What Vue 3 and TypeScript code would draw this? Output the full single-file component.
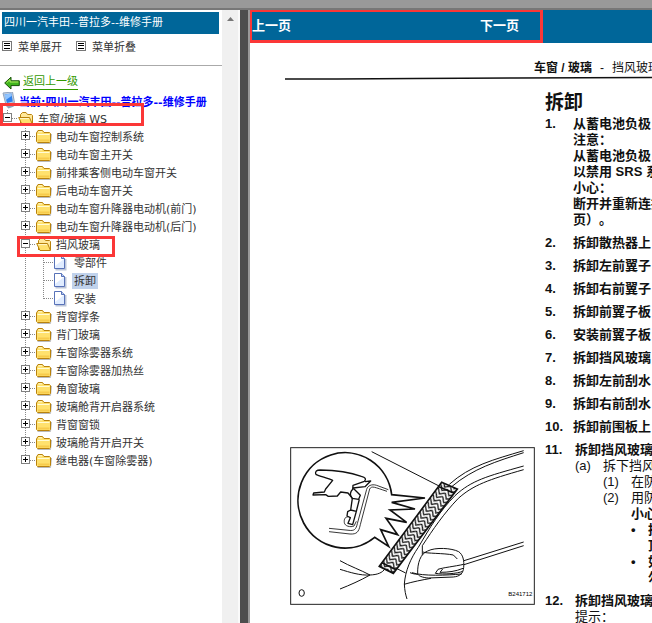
<script setup lang="ts">
import { computed, ref } from 'vue'

interface TreeGroup {
  label: string
  marked?: boolean
  pages?: string[]
}

interface Step {
  title: string
  lines?: string[]
}

const groups: TreeGroup[] = [
  { label: '电动车窗控制系统' },
  { label: '电动车窗主开关' },
  { label: '前排乘客侧电动车窗开关' },
  { label: '后电动车窗开关' },
  { label: '电动车窗升降器电动机(前门)' },
  { label: '电动车窗升降器电动机(后门)' },
  { label: '挡风玻璃', marked: true, pages: ['零部件', '拆卸', '安装'] },
  { label: '背窗撑条' },
  { label: '背门玻璃' },
  { label: '车窗除雾器系统' },
  { label: '车窗除雾器加热丝' },
  { label: '角窗玻璃' },
  { label: '玻璃舱背开启器系统' },
  { label: '背窗窗锁' },
  { label: '玻璃舱背开启开关' },
  { label: '继电器(车窗除雾器)' },
]

const rootOpen = ref(true)
const openGroups = ref<string[]>(['挡风玻璃'])
const selected = ref('拆卸')

const visibleGroups = computed(() => (rootOpen.value ? groups : []))

function isOpen(label: string): boolean {
  return openGroups.value.includes(label)
}

function toggle(label: string): void {
  openGroups.value = isOpen(label)
    ? openGroups.value.filter((name) => name !== label)
    : [...openGroups.value, label]
}

function expandAll(): void {
  rootOpen.value = true
  openGroups.value = groups.map((group) => group.label)
}

function collapseAll(): void {
  openGroups.value = []
}

const steps: Step[] = [
  {
    title: '从蓄电池负极',
    lines: ['注意：', '从蓄电池负极', '以禁用 SRS 系', '小心：', '断开并重新连接', '页）。'],
  },
  { title: '拆卸散热器上' },
  { title: '拆卸左前翼子' },
  { title: '拆卸右前翼子' },
  { title: '拆卸前翼子板' },
  { title: '安装前翼子板' },
  { title: '拆卸挡风玻璃' },
  { title: '拆卸左前刮水' },
  { title: '拆卸右前刮水' },
  { title: '拆卸前围板上' },
]
</script>

<template>
  <div class="frames">
    <div class="top-strip"></div>

    <div class="columns">
      <aside class="sidebar">
        <div class="sidebar-body">
          <h1 class="manual-title">四川一汽丰田--普拉多--维修手册</h1>

          <div class="menu-actions">
            <button type="button" class="menu-button" @click="expandAll">
              <svg class="menu-icon" viewBox="0 0 10 10" aria-hidden="true">
                <rect x="0.5" y="0.5" width="9" height="9" fill="#fff" stroke="#777" />
                <path d="M2 2.5h6M2 4.5h6M2 7.5h6" stroke="#000" />
              </svg>
              菜单展开
            </button>
            <button type="button" class="menu-button" @click="collapseAll">
              <svg class="menu-icon" viewBox="0 0 10 10" aria-hidden="true">
                <rect x="0.5" y="0.5" width="9" height="9" fill="#fff" stroke="#777" />
                <path d="M2 2.5h6M2 4.5h6M2 7.5h6" stroke="#000" />
              </svg>
              菜单折叠
            </button>
          </div>

          <nav class="tree">
            <div class="back-row">
              <svg class="back-icon" viewBox="0 0 16 14" aria-hidden="true">
                <path d="M0.7 7 7 1.2V4.8H15.3V9.6H7V13Z" fill="#3fb51c" stroke="#174f08" />
                <path d="M2.5 6.8 6 3.6V6H14.3" fill="none" stroke="#b4ef62" />
              </svg>
              <a href="#up" class="back-link">返回上一级</a>
            </div>

            <div class="row">
              <svg class="cell" viewBox="0 0 18 18" aria-hidden="true">
                <path d="M3 1 12.5 0 14.5 10.5 6 13Z" fill="#c3cfdf" stroke="#8fa3be" />
                <path d="M4.6 2.5 11.4 1.6 12.8 9.4 7 11Z" fill="#2f80ec" />
                <path d="M4.6 2.5 11.4 1.6 11.8 3.8 5.8 8Z" fill="#8fc4ff" />
                <path d="M6 14 12 12.5 14 14.5 8.5 16.5Z" fill="#8fa2ba" />
              </svg>
              <a href="#current" class="current">当前:四川一汽丰田--普拉多--维修手册</a>
            </div>

            <div class="row">
              <span class="cell joint last">
                <button
                  type="button"
                  class="toggle"
                  :class="{ open: rootOpen }"
                  aria-label="车窗/玻璃 WS"
                  @click="rootOpen = !rootOpen"
                ></button>
              </span>
              <svg class="cell" viewBox="0 0 18 18" aria-hidden="true">
                <path d="M2.5 14V4.5L4.5 2.5H8L9.5 4.5H13.5L14.5 5.5V14" fill="#ffe89a" stroke="#b9820d" />
                <path d="M0.7 7.5H11.5L14.5 14.5H4Z" fill="#ffe16d" stroke="#b9820d" />
                <path d="M2 8.6H11" stroke="#fff9cf" />
              </svg>
              <a href="#ws" class="label">车窗/玻璃 WS</a>
              <span class="mark mark-root"></span>
            </div>

            <template v-for="(group, index) in visibleGroups" :key="group.label">
              <div class="row">
                <span class="cell"></span>
                <span class="cell joint" :class="{ last: index === groups.length - 1 }">
                  <button
                    type="button"
                    class="toggle"
                    :class="{ open: isOpen(group.label) }"
                    :aria-label="group.label"
                    @click="toggle(group.label)"
                  ></button>
                </span>
                <svg v-if="isOpen(group.label)" class="cell" viewBox="0 0 18 18" aria-hidden="true">
                  <path d="M2.5 14V4.5L4.5 2.5H8L9.5 4.5H13.5L14.5 5.5V14" fill="#ffe89a" stroke="#b9820d" />
                  <path d="M0.7 7.5H11.5L14.5 14.5H4Z" fill="#ffe16d" stroke="#b9820d" />
                  <path d="M2 8.6H11" stroke="#fff9cf" />
                </svg>
                <svg v-else class="cell" viewBox="0 0 18 18" aria-hidden="true">
                  <path d="M1.5 15.5H14.5L15.5 6" fill="none" stroke="#bbb" />
                  <path
                    d="M0.5 13.5V5L2 2.5H6.5L8 4.5H13.5L14.5 5.5V13.5L13.5 14.5H1.5Z"
                    fill="#ffe16d"
                    stroke="#b9820d"
                  />
                  <path d="M1.5 6.5H13.5M2.5 3.8H6" stroke="#fffbd5" />
                  <path d="M2 12.5H13.5" stroke="#f7cb4c" stroke-width="2" />
                </svg>
                <a :href="'#' + group.label" class="label">{{ group.label }}</a>
                <span v-if="group.marked" class="mark mark-group"></span>
              </div>

              <template v-if="isOpen(group.label)">
                <div v-for="(page, at) in group.pages ?? []" :key="page" class="row">
                  <span class="cell"></span>
                  <span class="cell line"></span>
                  <span class="cell joint" :class="{ last: at === (group.pages?.length ?? 0) - 1 }"></span>
                  <svg class="cell" viewBox="0 0 18 18" aria-hidden="true">
                    <path d="M1.5 15.5H11.5V5" fill="none" stroke="#bcc5d8" stroke-width="2" />
                    <path d="M0.5 1.5H7.5L10.5 4.5V14.5H0.5Z" fill="#e0ecff" stroke="#5872b8" />
                    <path d="M1 2H7V5H10L1 12Z" fill="#fff" />
                    <path d="M7.5 1.5V4.5H10.5" fill="#b9cdf3" stroke="#5872b8" />
                  </svg>
                  <a
                    :href="'#' + page"
                    class="label"
                    :class="{ selected: selected === page }"
                    @click="selected = page"
                    >{{ page }}</a
                  >
                </div>
              </template>
            </template>
          </nav>
        </div>

        <div class="scroll-track">
          <svg class="scroll-arrow" viewBox="0 0 7 4" aria-hidden="true">
            <path d="M0 4 3.5 0 7 4Z" fill="#777" />
          </svg>
        </div>
      </aside>

      <div class="splitter"></div>

      <main class="viewer">
        <header class="pager">
          <div class="pager-links">
            <a href="#prev">上一页</a>
            <a href="#next">下一页</a>
          </div>
        </header>

        <article class="sheet">
          <p class="running-head"><b>车窗 / 玻璃</b><span>-</span><span>挡风玻璃</span></p>
          <svg class="rule" viewBox="0 0 367 4" preserveAspectRatio="none" aria-hidden="true">
            <path d="M0 3H52L130 2.5 230 2 367 1.5" fill="none" stroke="#111" stroke-width="1.6" />
          </svg>

          <div class="content">
            <section class="steps-upper">
              <h2>拆卸</h2>
              <ol class="steps">
                <li v-for="(step, index) in steps" :key="step.title + index" class="step">
                  <span class="number">{{ index + 1 }}.</span>
                  <div>
                    <p>{{ step.title }}</p>
                    <p v-for="(line, at) in step.lines ?? []" :key="at">{{ line }}</p>
                  </div>
                </li>
              </ol>
            </section>

            <svg class="figure" viewBox="30 24 735 474" role="img">
              <defs>
                <pattern
                  id="weave"
                  width="26"
                  height="13"
                  patternUnits="userSpaceOnUse"
                  patternTransform="rotate(37)"
                >
                  <path
                    d="M0 0 13 13 26 0M0 13 13 26 26 13M0 -13 13 0 26 -13"
                    fill="none"
                    stroke="#111"
                    stroke-width="4"
                  />
                </pattern>
              </defs>
              <rect x="32" y="26" width="731" height="470" fill="#fff" stroke="#222" stroke-width="3" />

              <g fill="none" stroke="#111" stroke-width="3" stroke-linejoin="round">
                <path d="M275 38 487 146" />
                <path d="M508 136C570 80 640 62 731 35M515 143C580 88 650 67 731 41" />
                <path d="M731 81C620 112 575 124 525 170C480 215 450 265 415 325C392 358 376 395 373 435C374 455 377 468 381 480" />
                <path d="M731 92C625 122 580 138 535 178C490 225 460 270 427 320V355" />
                <path d="M552 365 731 309M552 377 731 320" />
                <path d="M180 365C210 382 242 393 270 408C240 425 210 438 180 450" />
                <path d="M180 391C210 400 240 410 270 408C292 407 307 402 316 388" />
                <path d="M343 385 377 402M372 436C400 428 425 423 453 418M390 401C402 406 412 406 421 406" />
              </g>

              <g fill="#fff" stroke="#111" stroke-width="3" stroke-linejoin="round">
                <path d="M413 404C412 373 421 344 443 336C466 324 515 327 536 338C549 347 553 364 551 386C549 404 540 412 520 414L445 417C427 416 414 410 413 404Z" />
                <path d="M429 339C440 344 490 342 520 348L532 360" fill="none" />
                <path d="M551 376C525 382 488 386 474 391L466 403C490 407 532 404 548 397M488 390 480 400C505 400 528 397 549 388" fill="none" />
                <path d="M396 401C430 412 500 409 545 405" fill="none" />
              </g>

              <path d="M298 382 485 130 532 150 340 403Z" fill="#fff" />
              <path d="M298 382 485 130 532 150 340 403Z" fill="url(#weave)" stroke="#111" stroke-width="5" />
              <path d="M477 143 523 163M306 371 348 392" stroke="#111" stroke-width="5" />

              <path
                d="M284 295A141 143 0 1 1 335 167L435 177 335 190 405 210 330 213 380 250 318 238 353 287 302 272 326 322Z"
                fill="#fff"
                stroke="#111"
                stroke-width="5"
                stroke-linejoin="miter"
              />

              <g fill="none" stroke="#111" stroke-width="4" stroke-linejoin="round">
                <path d="M107 106C105 97 110 93 120 93C165 94 210 100 244 112C256 115 260 121 253 127L219 139 218 151C208 161 211 171 217 178L236 181 241 169 219 147 255 143 272 126 255 128" />
                <path d="M107 106C120 112 142 117 158 124L137 150 133 159 101 162 99 168 137 167 145 172 172 171 182 159 204 162 217 178" />
                <path d="M217 178 212 213 203 218 201 231 211 236 204 253 218 257 229 217 212 213M229 217 238 181" />
                <path d="M203 234C193 234 192 244 193 251C194 261 211 266 222 261L229 247" stroke-width="2.5" />
                <path d="M325 152 290 139C274 134 263 141 260 151L232 254C228 272 222 276 207 274L147 268" stroke-width="2.5" />
                <path d="M147 278 210 285C230 286 236 280 241 257L269 150C275 139 284 145 321 157" stroke-width="2.5" />
              </g>

              <ellipse cx="65" cy="462" rx="8" ry="10" fill="none" stroke="#111" stroke-width="3" />
              <text x="757" y="470" text-anchor="end" class="figure-code">B241712</text>
            </svg>

            <section class="steps-lower">
              <ol class="steps" start="11">
                <li class="step">
                  <span class="number">11.</span>
                  <div>
                    <p>拆卸挡风玻璃</p>
                    <div class="sub"><span>(a)</span><p>拆下挡风</p></div>
                    <div class="sub nested"><span>(1)</span><p>在防</p></div>
                    <div class="sub nested"><span>(2)</span><p>用防</p></div>
                    <div class="caution">
                      <p>小心</p>
                      <ul>
                        <li><span>•</span><p>挡<br />顶</p></li>
                        <li><span>•</span><p>如<br />勿</p></li>
                      </ul>
                    </div>
                  </div>
                </li>
                <li class="step">
                  <span class="number">12.</span>
                  <div>
                    <p>拆卸挡风玻璃</p>
                    <p class="plain">提示：</p>
                  </div>
                </li>
              </ol>
            </section>
          </div>
        </article>
        <span class="mark mark-pager"></span>
      </main>
    </div>
  </div>
</template>

<style>
body {
  margin: 0;
}
</style>

<style scoped>
.frames {
  display: flex;
  flex-direction: column;
  height: 100vh;
  overflow: hidden;
  background: #fff;
  color: #333;
  font-family: 'DejaVu Sans', 'Noto Sans CJK SC', sans-serif;
  font-size: 11px;
}

h1,
h2,
p,
ol,
ul {
  margin: 0;
  padding: 0;
}

ol,
ul {
  list-style: none;
}

button {
  padding: 0;
  border: 0;
  background: none;
  color: inherit;
  font: inherit;
}

.top-strip {
  flex: none;
  height: 8px;
  border-bottom: 2px solid #777;
  background: #999;
}

.columns {
  display: flex;
  flex: 1;
  min-height: 0;
}

.sidebar {
  display: flex;
  flex: none;
  width: 240px;
}

.sidebar-body {
  flex: 1;
  min-width: 0;
  padding-top: 2px;
  white-space: nowrap;
}

.manual-title {
  margin: 0 3px 0 2px;
  padding: 0 2px;
  background: #069;
  color: #fff;
  font-size: 11px;
  font-weight: 400;
  line-height: 22px;
}

.menu-actions {
  display: flex;
  gap: 14px;
  height: 31px;
  padding-left: 2px;
  border-bottom: 1px solid #aaa;
}

.menu-button {
  display: flex;
  gap: 6px;
  height: 24px;
  align-items: center;
}

.menu-icon {
  width: 10px;
  height: 10px;
}

.tree {
  padding-top: 7px;
}

.back-row {
  display: flex;
  gap: 3px;
  align-items: center;
  height: 19px;
  padding-left: 4px;
}

.back-icon {
  width: 16px;
  height: 14px;
}

.back-link {
  border-bottom: 1px solid #390;
  color: #390;
  line-height: 14px;
  text-decoration: none;
}

.row {
  position: relative;
  display: flex;
  align-items: center;
  height: 18px;
}

.cell {
  flex: none;
  width: 18px;
  height: 18px;
}

.line {
  background: repeating-linear-gradient(#888 0 1px, transparent 1px 2px) 7px 0 / 1px 18px no-repeat;
}

.joint {
  background:
    repeating-linear-gradient(#888 0 1px, transparent 1px 2px) 7px 0 / 1px 18px no-repeat,
    repeating-linear-gradient(90deg, #888 0 1px, transparent 1px 2px) 8px 8px / 10px 1px no-repeat;
}

.joint.last {
  background:
    repeating-linear-gradient(#888 0 1px, transparent 1px 2px) 7px 0 / 1px 9px no-repeat,
    repeating-linear-gradient(90deg, #888 0 1px, transparent 1px 2px) 8px 8px / 10px 1px no-repeat;
}

.toggle {
  display: block;
  width: 9px;
  height: 9px;
  margin: 3px;
  border: 1px solid #808080;
  box-sizing: border-box;
  background:
    linear-gradient(#000 0 0) center / 5px 1px no-repeat,
    linear-gradient(#000 0 0) center / 1px 5px no-repeat,
    #fff;
}

.toggle.open {
  background: linear-gradient(#000 0 0) center / 5px 1px no-repeat, #fff;
}

.label {
  padding: 1px 2px 0;
  color: #333;
  line-height: 15px;
  text-decoration: none;
}

.label.selected {
  background: #c0d2ec;
}

.current {
  padding-left: 1px;
  color: #00f;
  font-weight: 700;
  text-decoration: none;
}

.mark {
  position: absolute;
  z-index: 1;
  box-sizing: border-box;
  border: 3px solid #fb3737;
  pointer-events: none;
}

.mark-root {
  top: -7px;
  left: 0;
  width: 144px;
  height: 23px;
}

.mark-group {
  top: 0;
  left: 17px;
  width: 98px;
  height: 21px;
}

.scroll-track {
  width: 15px;
  padding: 7px 0 0 1px;
  border-right: 2px solid #fafafa;
  background: #f0f0f0;
}

.scroll-arrow {
  display: block;
  width: 7px;
  height: 4px;
  margin-left: 4px;
}

.splitter {
  flex: none;
  width: 8px;
  border-right: 2px solid #999;
  background: #4d4d4d;
}

.viewer {
  position: relative;
  flex: 1;
  min-width: 0;
  overflow: hidden;
  background: #fff;
}

.pager {
  height: 33px;
  background: #069;
}

.pager-links {
  display: grid;
  grid-template-columns: 228px auto;
  padding-left: 2px;
  line-height: 32px;
}

.pager-links a {
  color: #fff;
  font-size: 13px;
  font-weight: 700;
  text-decoration: none;
}

.mark-pager {
  top: -1px;
  left: -1px;
  width: 294px;
  height: 34px;
}

.sheet {
  padding: 17px 0 0 40px;
  color: #111;
  font-family: 'Liberation Sans', 'Noto Sans CJK SC', sans-serif;
  font-size: 13px;
  line-height: 16px;
  text-spacing-trim: space-all;
  white-space: nowrap;
}

.running-head {
  display: flex;
  gap: 8px;
  padding-left: 244px;
  font-size: 12px;
}

.rule {
  display: block;
  width: calc(100% + 5px);
  height: 4px;
  margin-left: -5px;
}

.content {
  display: grid;
  grid-template-columns: 245px 1fr;
  column-gap: 10px;
  padding-top: 10px;
}

.steps-upper,
.steps-lower {
  grid-column: 2;
  min-width: 0;
}

h2 {
  font-size: 19px;
  font-weight: 700;
  line-height: 26px;
}

.steps {
  display: flex;
  flex-direction: column;
  gap: 7px;
  font-weight: 700;
}

.step {
  display: grid;
  grid-template-columns: 28px auto;
  justify-content: start;
}

.steps-lower {
  grid-row: 2;
  padding-top: 7px;
}

.steps-lower .step {
  grid-template-columns: 30px auto;
}

.figure {
  grid-row: 2;
  width: 245px;
  height: 158px;
  margin-top: 12px;
}

.figure-code {
  font-family: 'Liberation Sans', sans-serif;
  font-size: 18px;
}

.sub {
  display: grid;
  grid-template-columns: 28px auto;
  justify-content: start;
  font-weight: 400;
}

.nested {
  padding-left: 28px;
}

.caution {
  padding-left: 56px;
}

.caution li {
  display: grid;
  grid-template-columns: 17px auto;
  justify-content: start;
}

.plain {
  font-weight: 400;
}
</style>
